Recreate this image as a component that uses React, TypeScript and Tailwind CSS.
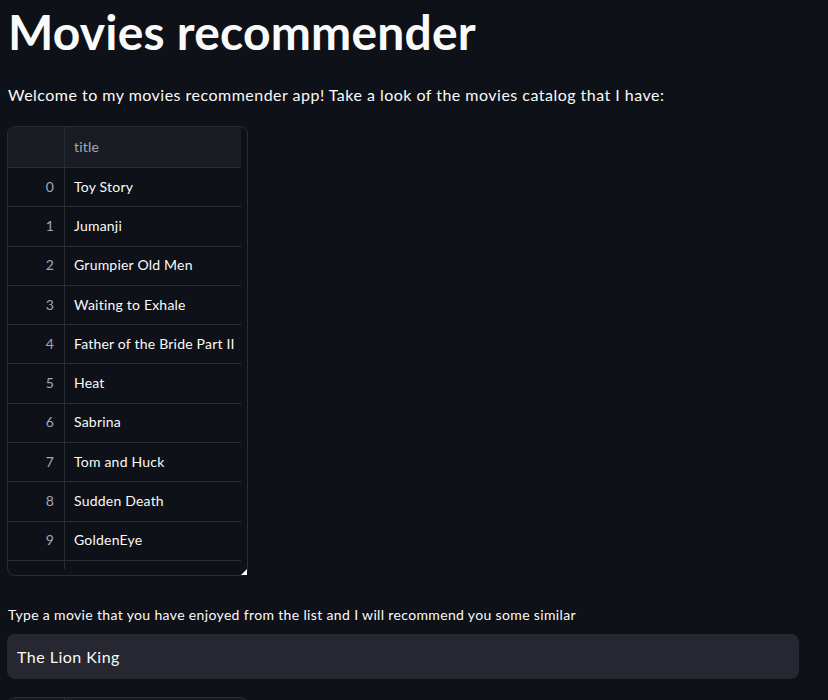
const movies = [
  'Toy Story',
  'Jumanji',
  'Grumpier Old Men',
  'Waiting to Exhale',
  'Father of the Bride Part II',
  'Heat',
  'Sabrina',
  'Tom and Huck',
  'Sudden Death',
  'GoldenEye',
];

const font = { fontFamily: 'Lato, "Noto Sans", sans-serif' };

export default function App() {
  return (
    <div className="h-[700px] bg-[#0e1117] text-[#fafafa] overflow-hidden tracking-[0.03em]" style={font}>
      <div className="px-[8px] pt-[2px]">
        {/* Title */}
        <h1 className="text-[48px] font-bold leading-[60px] tracking-[0.2px]">Movies recommender</h1>
        <p className="mt-[21px] text-[16px] leading-[24px]">
          Welcome to my movies recommender app! Take a look of the movies catalog that I have:
        </p>

        {/* Catalog table */}
        <div className="relative mt-[19px] w-[241px] h-[450px] -ml-[1px]">
          <div className="h-full rounded-[8px] border border-[#2b2d35] overflow-hidden">
            <div className="w-[233px] text-[14px] tracking-[0.015em]">
              <div className="flex h-[41px] bg-[#1a1c24] border-b border-[#2b2d35] text-[#a3a8b8]">
                <div className="w-[57px] border-r border-[#2b2d35]" />
                <div className="flex-1 flex items-center pl-[9px] pb-[1px]">title</div>
              </div>
              {movies.map((m, i) => (
                <div key={m} className="flex h-[39.3px] border-b border-[#2b2d35]">
                  <div className="w-[57px] border-r border-[#2b2d35] flex items-center justify-end pr-[10px] pb-[2px] text-[#a3a8b8]">
                    {i}
                  </div>
                  <div className="flex-1 flex items-center pl-[9px] pb-[2px] whitespace-nowrap overflow-hidden">{m}</div>
                </div>
              ))}
              <div className="h-[8px] w-[57px] border-r border-[#2b2d35]" />
            </div>
          </div>
          {/* resize handle */}
          <div className="absolute right-[1px] bottom-[1px] w-0 h-0 border-l-[6px] border-l-transparent border-b-[6px] border-b-white" />
        </div>

        {/* Input */}
        <label className="block mt-[29px] text-[14px] leading-[20px] tracking-[0.025em]">
          Type a movie that you have enjoyed from the list and I will recommend you some similar
        </label>
        <div className="mt-[9px] -ml-[1px] w-[792px] h-[45px] rounded-[8px] bg-[#262730] flex items-center px-[10px] text-[16px]">
          The Lion King
        </div>

        {/* Recommendations table (cut off) */}
        <div className="mt-[18px] -ml-[1px] w-[241px] h-[80px] rounded-[8px] border border-[#2b2d35] overflow-hidden">
          <div className="flex h-[40px] bg-[#1a1c24]">
            <div className="w-[57px] border-r border-[#2b2d35]" />
          </div>
        </div>
      </div>
    </div>
  );
}
